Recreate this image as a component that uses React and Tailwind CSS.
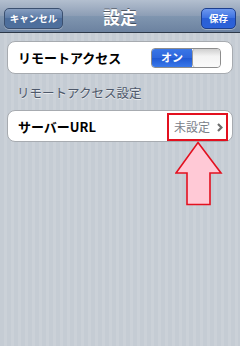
import React from "react";

const Chevron = () => (
  <svg width="6" height="9" viewBox="0 0 6 9" className="ml-[7px]">
    <path d="M1 1l3.5 3.5L1 8" fill="none" stroke="#6e6e6e" strokeWidth="2.2" />
  </svg>
);

const UpArrow = () => (
  <svg width="48" height="65" viewBox="0 0 48 65" className="absolute left-[175px] top-[141px]">
    <polygon
      points="23,1.5 46,32 35,32 35,63.5 12,63.5 12,32 1,32"
      fill="#ffc9d6"
      stroke="#e3101f"
      strokeWidth="1.6"
      strokeLinejoin="miter"
    />
  </svg>
);

export default function App() {
  return (
    <div
      className="relative w-[240px] h-[346px] overflow-hidden bg-[repeating-linear-gradient(90deg,#c5ccd4_0px,#c5ccd4_4px,#cbd1d8_4px,#cbd1d8_7px)]"
      style={{ fontFamily: '"Noto Sans CJK JP", "Noto Sans", sans-serif' }}
    >
      <div className="h-[33px] grid grid-cols-[1fr_auto_1fr] items-center px-[4px] bg-[linear-gradient(#b3bfcf,#8c9db5_50%,#8096b0_50%,#6c82a0)] border-b border-[#2d3949]">
        <div className="justify-self-start">
          <button className="h-[21px] w-[59px] rounded-[5px] border border-[#3b5070] bg-[linear-gradient(#879ec0,#5b7aa5_50%,#4c6d9b_50%,#4f709d)] text-[9.5px] font-bold text-white leading-none shadow-[0_1px_0_rgba(255,255,255,0.35)]">
            キャンセル
          </button>
        </div>
        <div className="text-[17px] font-bold text-white leading-none [text-shadow:0_-1px_0_rgba(0,0,0,0.45)]">設定</div>
        <div className="justify-self-end">
          <button className="h-[21px] w-[35px] rounded-[5px] border border-[#1d3f8e] bg-[linear-gradient(#6d98ef,#3a6fe0_50%,#2a5fd6_50%,#2c62d9)] text-[9.5px] font-bold text-white leading-none shadow-[0_1px_0_rgba(255,255,255,0.35)]">
            保存
          </button>
        </div>
      </div>

      <div className="px-[7px] pt-[8px]">
        <div className="h-[33px] bg-white rounded-[8px] border border-[#a7abb0] flex items-center justify-between pl-[10px] pr-[11px]">
          <span className="text-[13px] font-bold text-black leading-none">リモートアクセス</span>
          <div className="flex h-[20px] w-[70px] rounded-[4px] border border-[#8d8d8d] overflow-hidden">
            <div className="w-[40px] flex items-center justify-center bg-[linear-gradient(#3a76e6,#2d66dc_50%,#1f58d2_50%,#3a78ea)] text-white text-[11px] font-bold leading-none">
              オン
            </div>
            <div className="flex-1 bg-[linear-gradient(#cfcfcf,#f3f3f3_40%,#fafafa)] border-l border-[#9a9a9a] rounded-[3px]"></div>
          </div>
        </div>

        <div className="mt-[10px] h-[18px] pl-[10px] text-[12.5px] text-[#4e586a] leading-[18px] [text-shadow:0_1px_0_rgba(255,255,255,0.6)]">
          リモートアクセス設定
        </div>

        <div className="mt-[8px] h-[32px] bg-white rounded-[8px] border border-[#a7abb0] flex items-center justify-between pl-[10px] pr-[4px]">
          <span className="text-[13px] font-bold text-black leading-none">サーバーURL</span>
          <div className="mt-[2px] h-[28px] w-[61px] border-2 border-[#e3101f] flex items-center pl-[5px]">
            <span className="text-[12px] text-[#7a8088] leading-none">未設定</span>
            <Chevron />
          </div>
        </div>
      </div>

      <UpArrow />
    </div>
  );
}
